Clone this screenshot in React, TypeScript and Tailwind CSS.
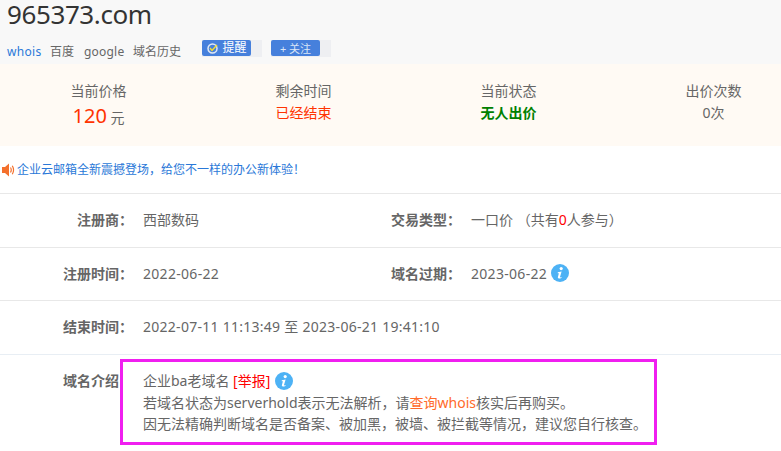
const font = { fontFamily: '"Noto Sans", "Noto Sans CJK SC", sans-serif' };

function Info() {
  return (
    <svg width="18" height="18" viewBox="0 0 18 18" className="shrink-0">
      <circle cx="9" cy="9" r="9" fill="#4db2f5" />
      <circle cx="10.2" cy="4.6" r="1.6" fill="#fff" />
      <path d="M6.8 8.2 L10.6 7.4 L9 13 Q8.8 13.8 10.6 13 L10.4 13.9 Q7 15.2 6.8 13.4 L7.9 9.3 L6.7 9.2 Z" fill="#fff" />
    </svg>
  );
}

function Speaker() {
  return (
    <svg width="13" height="14" viewBox="0 0 13 14" className="shrink-0">
      <path d="M0 4 H3 L7 0.5 V13.5 L3 10 H0 Z" fill="#f4702c" />
      <path d="M8.5 4.5 Q10 7 8.5 9.5 M10.3 2.8 Q12.8 7 10.3 11.2" stroke="#f4702c" strokeWidth="1.2" fill="none" />
    </svg>
  );
}

function Stat({ label, children }: { label: string; children: React.ReactNode }) {
  return (
    <div className="w-[205px] shrink-0 flex flex-col items-center">
      <div className="text-[14px] leading-[20px] text-[#666]">{label}</div>
      {children}
    </div>
  );
}

function Btn({ children }: { children: React.ReactNode }) {
  return (
    <div className="w-[60px] h-[17px] bg-[#eeeff2] flex">
      <div className="w-[49px] h-[16px] bg-[#4680dc] rounded-[2px] flex items-center justify-center gap-[5px] text-white text-[12px] leading-none">
        {children}
      </div>
    </div>
  );
}

function Row({ children, h }: { children: React.ReactNode; h: string }) {
  return <div className={`flex items-center ${h} pb-[2px] border-t border-[#e8e8e8] text-[14px] text-[#666]`}>{children}</div>;
}

function Label({ children }: { children: React.ReactNode }) {
  return <div className="w-[133px] shrink-0 text-right font-bold text-[#666]">{children}</div>;
}

function Value({ children }: { children: React.ReactNode }) {
  return <div className="w-[258px] pl-[10px] shrink-0 tracking-[0.3px]">{children}</div>;
}

export default function App() {
  return (
    <div className="w-[781px] h-[451px] overflow-hidden bg-white" style={font}>
      <div className="h-[64px] bg-[#f8f8f8] pl-[7px] pt-[1px]">
        <div className="h-[30px] text-[26px] leading-[26px] tracking-[-0.4px] text-[#333]">965373.com</div>
        <div className="flex items-start mt-[9px]">
          <div className="flex text-[12px] leading-[24px] text-[#666]">
            <span className="w-[43px] text-[#2a78d8] tracking-[0.3px]">whois</span>
            <span className="w-[34px]">百度</span>
            <span className="w-[49px] tracking-[0.2px]">google</span>
            <span>域名历史</span>
          </div>
          <div className="flex gap-[9px] ml-[21px]">
            <Btn>
              <svg width="11" height="11" viewBox="0 0 11 11">
                <circle cx="5.5" cy="5.5" r="4.5" fill="none" stroke="#dfe8f5" strokeWidth="1.5" />
                <path d="M3 5 L5 7.5 L10 2" fill="none" stroke="#f4dc30" strokeWidth="1.4" />
              </svg>
              <span>提醒</span>
            </Btn>
            <Btn>
              <span className="text-[#dbe6f7] text-[11px]">+ 关注</span>
            </Btn>
          </div>
        </div>
      </div>
      <div className="h-[82px] bg-[#fffaf4] flex pt-[17px] -ml-[4px]">
        <Stat label="当前价格">
          <div className="text-[14px] text-[#666] leading-[32px] mt-[-1px]">
            <span className="text-[20px] text-[#ff3300]">120</span> 元
          </div>
        </Stat>
        <Stat label="剩余时间">
          <div className="text-[14px] leading-[24px] text-[#ff3300]">已经结束</div>
        </Stat>
        <Stat label="当前状态">
          <div className="text-[14px] leading-[24px] font-bold text-[#008000]">无人出价</div>
        </Stat>
        <Stat label="出价次数">
          <div className="text-[14px] leading-[24px] text-[#666]">0次</div>
        </Stat>
      </div>
      <div className="h-[47px] flex items-center pl-[2px] gap-[2px] text-[12px] text-[#2a78d8]">
        <Speaker />
        <span>企业云邮箱全新震撼登场，给您不一样的办公新体验！</span>
      </div>
      <Row h="h-[54px]">
        <Label>注册商：</Label>
        <Value><span className="tracking-normal">西部数码</span></Value>
        <div className="w-[80px] shrink-0 font-bold">交易类型：</div>
        <div>一口价 （共有<span className="text-[#ff0000]">0</span>人参与）</div>
      </Row>
      <Row h="h-[53px]">
        <Label>注册时间：</Label>
        <Value>2022-06-22</Value>
        <div className="w-[80px] shrink-0 font-bold">域名过期：</div>
        <div className="flex items-center gap-[4px] tracking-[0.3px]">2023-06-22 <Info /></div>
      </Row>
      <Row h="h-[54px]">
        <Label>结束时间：</Label>
        <div className="pl-[10px] tracking-[0.27px]">2022-07-11 11:13:49 至 2023-06-21 19:41:10</div>
      </Row>
      <div className="border-t border-[#e8eef4] flex text-[14px] text-[#666] pt-[4px]">
        <div className="w-[119px] mr-[1px] shrink-0 text-right font-bold pt-[10px] leading-[24px] whitespace-nowrap">域名介绍</div>
        <div className="w-[537px] h-[86px] border-[3px] border-[#f01ff0] pl-[20px] pt-[8px] leading-[21.5px]">
          <div className="flex items-center gap-[5px]">
            <span>企业ba老域名 <span className="text-[#ff0000]">[举报]</span></span>
            <Info />
          </div>
          <div>若域名状态为serverhold表示无法解析，请<span className="text-[#ff6a2a]">查询whois</span>核实后再购买。</div>
          <div>因无法精确判断域名是否备案、被加黑，被墙、被拦截等情况，建议您自行核查。</div>
        </div>
      </div>
    </div>
  );
}
